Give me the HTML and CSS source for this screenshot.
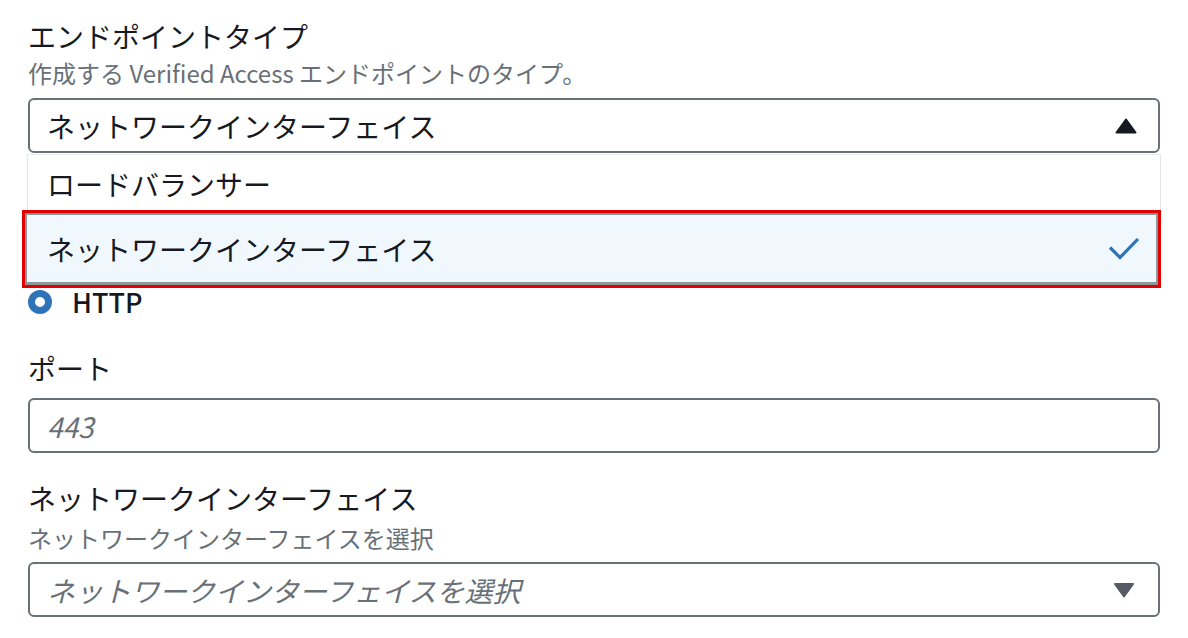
FILE: index.html
```html
<!DOCTYPE html>
<html lang="ja">
<head>
<meta charset="utf-8">
<link rel="stylesheet" href="styles.css">
</head>
<body>
<div class="page">
  <div class="field">
    <div class="label">エンドポイントタイプ</div>
    <div class="desc">作成する Verified Access エンドポイントのタイプ。</div>
    <div class="select-wrap">
      <div class="select open">
        <span class="value">ネットワークインターフェイス</span>
        <svg class="caret" width="22" height="16" viewBox="0 0 22 16"><path d="M11 1.5 L20.5 14.5 L1.5 14.5 Z" fill="#16191f" stroke="#16191f" stroke-width="2" stroke-linejoin="round"/></svg>
      </div>
      <div class="menu">
        <div class="option">ロードバランサー</div>
        <div class="option selected">
          <span>ネットワークインターフェイス</span>
          <svg class="check" width="32" height="24" viewBox="0 0 32 24"><path d="M2 10.5 L12 20.5 L30 2" fill="none" stroke="#2e73b8" stroke-width="3.2"/></svg>
        </div>
      </div>
    </div>
  </div>

  <div class="radio-row">
    <span class="radio"></span>
    <span class="radio-label">HTTP</span>
  </div>

  <div class="field port">
    <div class="label">ポート</div>
    <div class="input"><span class="placeholder">443</span></div>
  </div>

  <div class="field eni">
    <div class="label">ネットワークインターフェイス</div>
    <div class="desc desc2">ネットワークインターフェイスを選択</div>
    <div class="select closed">
      <span class="placeholder">ネットワークインターフェイスを選択</span>
      <svg class="caret" width="22" height="16" viewBox="0 0 22 16"><path d="M2 2 L20 2 L11 14.5 Z" fill="#545b64" stroke="#545b64" stroke-width="2" stroke-linejoin="round"/></svg>
    </div>
  </div>
</div>
</body>
</html>
```
FILE: styles.css
```css
* { box-sizing: border-box; }
html, body { margin: 0; padding: 0; background: #fff; }
body {
  font-family: "Noto Sans CJK JP", "Noto Sans", sans-serif;
  color: #16191f;
  width: 1188px;
  height: 638px;
  overflow: hidden;
}
.page {
  padding: 18px 28px 0 28px;
}
.label {
  font-size: 28px;
  line-height: 36px;
  color: #16191f;
}
.desc {
  font-size: 24px;
  line-height: 34px;
  margin-top: 2px;
  color: #687078;
}
.select-wrap {
  position: relative;
  margin-top: 8px;
}
.select, .input {
  height: 55px;
  border: 2px solid #687078;
  border-radius: 6px;
  display: flex;
  align-items: center;
  justify-content: space-between;
  padding: 0 21px 0 17px;
  font-size: 28px;
  background: #fff;
}
.placeholder {
  color: #687078;
  font-style: italic;
}
.menu {
  position: absolute;
  top: 56px;
  left: -1px;
  right: -1px;
  background: #fff;
  border-left: 1px solid #e4e7ea;
  border-right: 1px solid #e4e7ea;
  border-top: 1px solid #eaeded;
  z-index: 2;
}
.option {
  height: 58px;
  display: flex;
  align-items: center;
  justify-content: space-between;
  padding: 0 18px 0 19px;
  font-size: 28px;
  color: #16191f;
}
.option.selected {
  height: 72px;
  margin-left: -3px;
  margin-right: 2px;
  background: #f1f8fd;
  border: 2px solid #8d9799;
  border-bottom-width: 3px;
  outline: 3px solid #e00000;
  padding: 0 16px 0 20px;
}
.check { display: block; }
.radio-row {
  margin-top: 136px;
  height: 26px;
  display: flex;
  align-items: center;
  gap: 20px;
}
.radio {
  width: 24px;
  height: 24px;
  border-radius: 50%;
  border: 7px solid #2e73b8;
  background: #fff;
}
.radio-label {
  font-size: 27px;
  font-weight: 500;
  line-height: 26px;
  color: #16191f;
}
.port { margin-top: 35px; }
.port .input { margin-top: 12px; }
.eni { margin-top: 27px; }
.desc2 { margin-top: 5px; }
.eni .select { margin-top: 7px; }
.closed .caret { margin-right: 2px; }
```
